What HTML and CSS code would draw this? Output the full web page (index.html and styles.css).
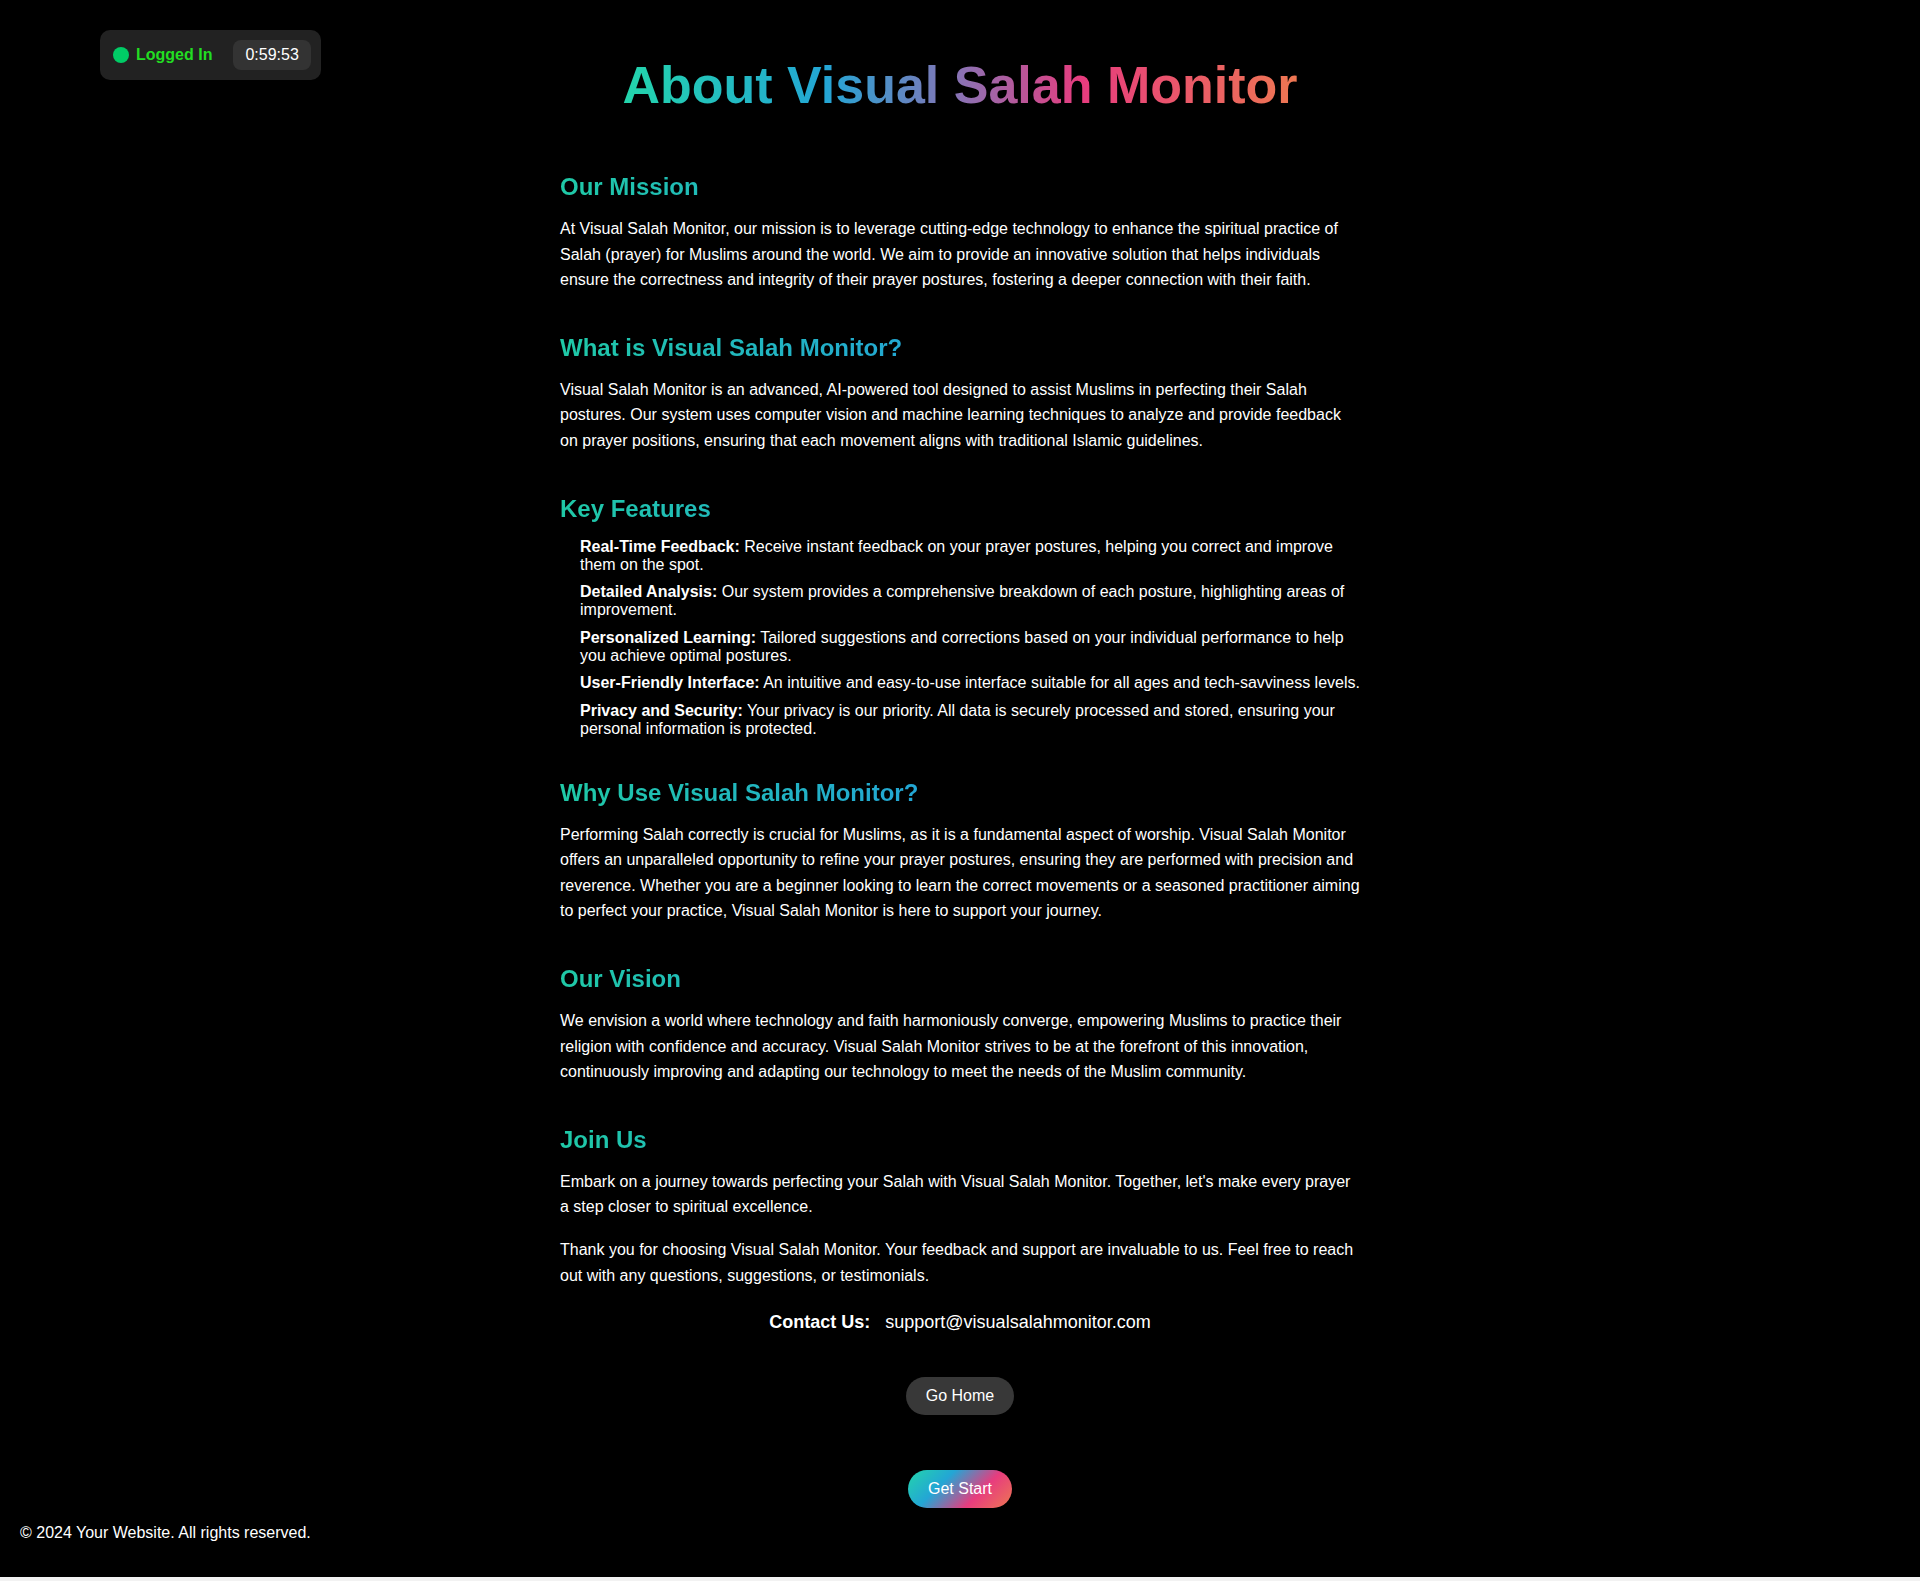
FILE: index.html
```html
<!DOCTYPE html>
<html lang="en">
<head>
<meta charset="utf-8">
<title>About Visual Salah Monitor</title>
<link rel="stylesheet" href="styles.css">
</head>
<body>
<div class="status">
  <span class="status-dot"></span>
  <span class="status-label">Logged In</span>
  <span class="status-timer">0:59:53</span>
</div>

<main class="about">
  <h1 class="title">About Visual Salah Monitor</h1>

  <section class="block">
    <h2 class="heading">Our Mission</h2>
    <p class="para">At Visual Salah Monitor, our mission is to leverage cutting-edge technology to enhance the spiritual practice of Salah (prayer) for Muslims around the world. We aim to provide an innovative solution that helps individuals ensure the correctness and integrity of their prayer postures, fostering a deeper connection with their faith.</p>
  </section>

  <section class="block">
    <h2 class="heading">What is Visual Salah Monitor?</h2>
    <p class="para">Visual Salah Monitor is an advanced, AI-powered tool designed to assist Muslims in perfecting their Salah postures. Our system uses computer vision and machine learning techniques to analyze and provide feedback on prayer positions, ensuring that each movement aligns with traditional Islamic guidelines.</p>
  </section>

  <section class="block">
    <h2 class="heading">Key Features</h2>
    <ul class="features">
      <li class="feature"><strong>Real-Time Feedback:</strong> Receive instant feedback on your prayer postures, helping you correct and improve them on the spot.</li>
      <li class="feature"><strong>Detailed Analysis:</strong> Our system provides a comprehensive breakdown of each posture, highlighting areas of improvement.</li>
      <li class="feature"><strong>Personalized Learning:</strong> Tailored suggestions and corrections based on your individual performance to help you achieve optimal postures.</li>
      <li class="feature"><strong>User-Friendly Interface:</strong> An intuitive and easy-to-use interface suitable for all ages and tech-savviness levels.</li>
      <li class="feature"><strong>Privacy and Security:</strong> Your privacy is our priority. All data is securely processed and stored, ensuring your personal information is protected.</li>
    </ul>
  </section>

  <section class="block">
    <h2 class="heading">Why Use Visual Salah Monitor?</h2>
    <p class="para">Performing Salah correctly is crucial for Muslims, as it is a fundamental aspect of worship. Visual Salah Monitor offers an unparalleled opportunity to refine your prayer postures, ensuring they are performed with precision and reverence. Whether you are a beginner looking to learn the correct movements or a seasoned practitioner aiming to perfect your practice, Visual Salah Monitor is here to support your journey.</p>
  </section>

  <section class="block">
    <h2 class="heading">Our Vision</h2>
    <p class="para">We envision a world where technology and faith harmoniously converge, empowering Muslims to practice their religion with confidence and accuracy. Visual Salah Monitor strives to be at the forefront of this innovation, continuously improving and adapting our technology to meet the needs of the Muslim community.</p>
  </section>

  <section class="block block-last">
    <h2 class="heading">Join Us</h2>
    <p class="para">Embark on a journey towards perfecting your Salah with Visual Salah Monitor. Together, let's make every prayer a step closer to spiritual excellence.</p>
    <p class="para para-next">Thank you for choosing Visual Salah Monitor. Your feedback and support are invaluable to us. Feel free to reach out with any questions, suggestions, or testimonials.</p>
  </section>

  <div class="contact">
    <strong class="contact-label">Contact Us:</strong>
    <span class="contact-mail">support@visualsalahmonitor.com</span>
  </div>

  <div class="actions">
    <a class="btn btn-home" href="#">Go Home</a>
  </div>

  <div class="actions actions-start">
    <a class="btn btn-start" href="#">Get Start</a>
  </div>
</main>

<footer class="footer">
  <p class="footer-text">&copy; 2024 Your Website. All rights reserved.</p>
</footer>
</body>
</html>
```

FILE: styles.css
```css
html {
  margin: 0;
  padding: 0;
  background: #f2f2f2;
}

body {
  margin: 0;
  padding: 0;
  background: #000;
  color: #fff;
  font-family: "Liberation Sans", Arial, sans-serif;
  font-size: 16px;
}

/* Login status badge (floating over page) */
.status {
  position: absolute;
  top: 30px;
  left: 100px;
  display: flex;
  align-items: center;
  padding: 10px 10px 10px 13px;
  background: #222;
  border-radius: 10px;
}

.status-dot {
  width: 16px;
  height: 16px;
  border-radius: 50%;
  background: #00cc66;
  margin-right: 7px;
}

.status-label {
  color: #22dd22;
  font-weight: bold;
  line-height: 18px;
  margin-right: 21px;
}

.status-timer {
  background: #333;
  border-radius: 8px;
  padding: 6px 12px;
  line-height: 18px;
  color: #fff;
}

/* Main content */
.about {
  width: 800px;
  margin: 0 auto;
  padding-top: 55px;
}

.title {
  width: fit-content;
  margin: 0 auto 58px;
  font-size: 52px;
  font-weight: bold;
  line-height: normal;
  background: linear-gradient(90deg, #23d5ab 0%, #23a6d5 30%, #8a72b4 50%, #e73c7e 68%, #ee7752 100%);
  -webkit-background-clip: text;
  background-clip: text;
  color: transparent;
}

.block {
  margin: 0 0 41px;
}

.block-last {
  margin-bottom: 0;
}

.heading {
  margin: 0 0 15px;
  font-size: 24px;
  font-weight: bold;
  line-height: normal;
  background: linear-gradient(90deg, #1fc9a6 0%, #23a6d5 45%, #e73c7e 80%, #ee7752 100%);
  -webkit-background-clip: text;
  background-clip: text;
  color: transparent;
}

.para {
  margin: 0;
  line-height: 1.6;
}

.para-next {
  margin-top: 17px;
}

.features {
  list-style: none;
  margin: 0;
  padding: 0 0 0 20px;
}

.feature {
  line-height: normal;
  margin-bottom: 9.5px;
}

.feature:last-child {
  margin-bottom: 0;
}

.contact {
  display: flex;
  justify-content: center;
  gap: 15px;
  margin-top: 21px;
  font-size: 18px;
  line-height: 1.55;
}

.actions {
  display: flex;
  justify-content: center;
  margin-top: 40px;
}

.actions-start {
  margin-top: 55px;
}

.btn {
  display: inline-block;
  padding: 10px 20px;
  border-radius: 25px;
  color: #fff;
  text-decoration: none;
  line-height: 18px;
  font-size: 16px;
}

.btn-home {
  background: #383838;
}

.btn-start {
  background: linear-gradient(-45deg, #ee7752, #e73c7e, #23a6d5, #23d5ab);
}

.footer {
  padding: 16px 20px 35px;
}

.footer-text {
  margin: 0;
  line-height: normal;
}
```
